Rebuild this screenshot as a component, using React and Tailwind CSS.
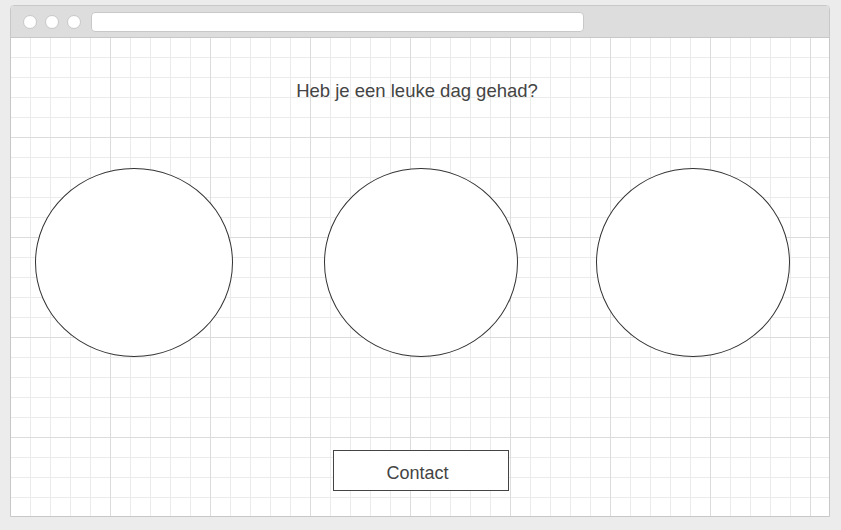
import React from 'react';

const gridBg =
  'bg-[linear-gradient(to_right,transparent_99px,#dcdcdc_99px),linear-gradient(to_bottom,transparent_99px,#dcdcdc_99px),linear-gradient(to_right,transparent_19px,#ebebeb_19px),linear-gradient(to_bottom,transparent_19px,#ebebeb_19px)] bg-[size:100px_100px,100px_100px,20px_20px,20px_20px]';

const Dot = () => <div className="w-[14px] h-[14px] rounded-full bg-white border border-[#c8c8c8]" />;

export default function App() {
  return (
    <div className="w-[841px] h-[530px] bg-[#ececec] pt-[5px] pl-[10px] font-['Liberation_Sans',Arial,sans-serif]">
      <div className="w-[820px] h-[512px] border border-[#c8c8c8] rounded-t-[4px] flex flex-col bg-white overflow-hidden">
        {/* title bar */}
        <div className="h-[32px] shrink-0 bg-[#dddddd] border-b border-[#c8c8c8] flex items-center pl-[12px] gap-[8px]">
          <Dot />
          <Dot />
          <Dot />
          <div className="ml-[2px] w-[493px] h-[20px] bg-white rounded-[4px] border border-[#c8c8c8]" />
        </div>

        {/* content */}
        <div className={`flex-1 flex flex-col items-center ${gridBg}`}>
          <p className="mt-[42px] text-[18.5px] leading-[21px] text-[#444] ml-[-6px]">Heb je een leuke dag gehad?</p>

          <div className="self-stretch flex mt-[67px] pl-[24px]">
            <div className="w-[198px] h-[189px] rounded-[50%] border border-[#333] bg-white" />
            <div className="ml-[91px] w-[194px] h-[189px] rounded-[50%] border border-[#333] bg-white" />
            <div className="ml-[78px] w-[194px] h-[189px] rounded-[50%] border border-[#333] bg-white" />
          </div>

          <button className="mt-[93px] w-[176px] h-[41px] border border-[#444] bg-white text-[18px] text-[#444] ml-[2px] pt-[6px] pr-[7px]">
            Contact
          </button>
        </div>
      </div>
    </div>
  );
}
